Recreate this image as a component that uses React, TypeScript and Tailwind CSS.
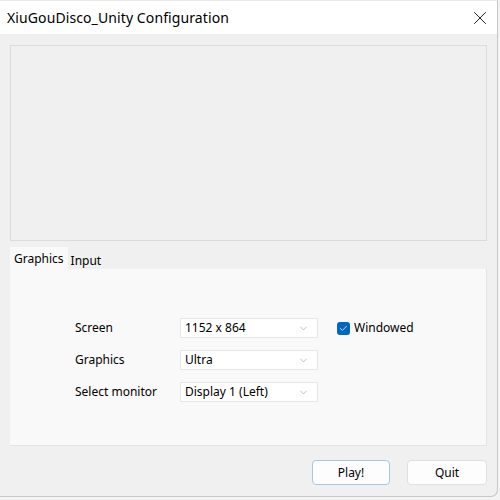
import React, { useState } from 'react';
import { X, ChevronDown, Check } from 'lucide-react';

const font = { fontFamily: '"Noto Sans", "Open Sans", sans-serif' };

const Select: React.FC<{ value: string }> = ({ value }) => (
  <div className="w-[138px] h-[20px] bg-white border border-[#e6e6e6] flex items-center justify-between pl-[4px] pr-[8px] text-[12px] text-black">
    <span>{value}</span>
    <ChevronDown size={11} strokeWidth={1.2} className="text-[#8a8a8a]" />
  </div>
);

export default function App() {
  const [tab, setTab] = useState('Graphics');
  const [windowed, setWindowed] = useState(true);

  const rows = [
    { label: 'Screen', value: '1152 x 864' },
    { label: 'Graphics', value: 'Ultra' },
    { label: 'Select monitor', value: 'Display 1 (Left)' },
  ];

  return (
    <div className="w-[500px] h-[500px] bg-[#f3f3f3] overflow-hidden" style={font}>
      <div className="w-[498px] h-[497px] bg-[#f0f0f0] border-r border-b border-t border-t-[#e8e8e8] border-[#c8c8c8] rounded-br-[7px] flex flex-col overflow-hidden">
        {/* Title bar */}
        <div className="h-[33px] bg-white flex items-center justify-between pl-[7px] pr-[6px] shrink-0">
          <span className="text-[14px] text-black leading-none tracking-[0.1px]">XiuGouDisco_Unity Configuration</span>
          <X size={22} strokeWidth={1.05} className="text-[#1a1a1a]" />
        </div>

        <div className="flex flex-col px-[10px] pt-[11px]">
          {/* Banner area */}
          <div className="h-[196px] bg-[#f0f0f0] border border-[#dcdcdc]" />

          {/* Tabs */}
          <div className="flex mt-[6px] text-[12px] text-black">
            <button
              onClick={() => setTab('Graphics')}
              className={`h-[22px] px-[4px] pt-[2px] leading-none ${tab === 'Graphics' ? 'bg-[#f9f9f9]' : 'bg-[#f0f0f0]'}`}
            >
              Graphics
            </button>
            <button
              onClick={() => setTab('Input')}
              className={`h-[22px] px-[3px] pt-[6px] leading-none ${tab === 'Input' ? 'bg-[#f9f9f9]' : 'bg-[#f0f0f0]'}`}
            >
              Input
            </button>
          </div>

          {/* Tab panel */}
          <div className="h-[177px] bg-[#f9f9f9] border-b border-r border-[#e4e4e4] pt-[49px] pl-[65px]">
            <div className="flex">
              <div className="flex flex-col gap-[12px]">
                {rows.map((r) => (
                  <div key={r.label} className="flex items-center h-[20px]">
                    <span className="w-[105px] text-[12px] text-black">{r.label}</span>
                    <Select value={r.value} />
                  </div>
                ))}
              </div>
              <label className="flex items-center gap-[4px] ml-[19px] h-[18px] mt-[1px] text-[12px] text-black">
                <span
                  onClick={() => setWindowed(!windowed)}
                  className="w-[13px] h-[13px] rounded-[3px] bg-[#0067c0] flex items-center justify-center"
                >
                  {windowed && <Check size={9} strokeWidth={2} className="text-white" />}
                </span>
                Windowed
              </label>
            </div>
          </div>

          {/* Buttons */}
          <div className="flex justify-end gap-[17px] mt-[14px] text-[12px] text-black">
            <button className="w-[78px] h-[25px] bg-[#fdfdfd] border border-[#a9c7e4] rounded-[4px]">Play!</button>
            <button className="w-[80px] h-[25px] bg-[#fdfdfd] border border-[#e0e0e0] rounded-[4px]">Quit</button>
          </div>
        </div>
      </div>
    </div>
  );
}
